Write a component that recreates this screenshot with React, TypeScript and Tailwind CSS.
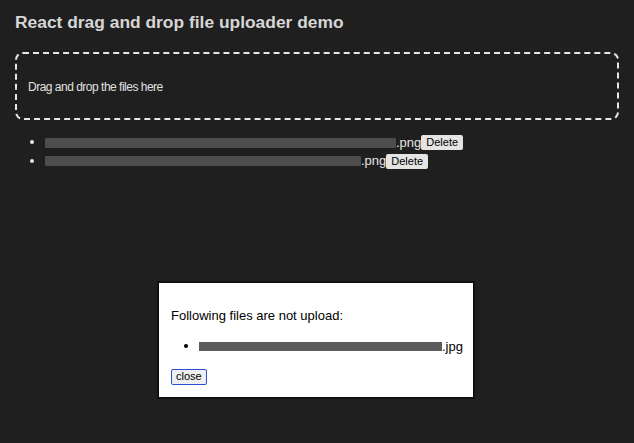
import React from 'react';

const files = [
  { id: 1, bar: 351, ext: '.png' },
  { id: 2, bar: 316, ext: '.png' },
];

const App: React.FC = () => {
  return (
    <div className="relative h-[443px] w-[634px] overflow-hidden bg-[#1f1f1f] px-[15px] pt-[11px] font-['Liberation_Sans',Arial,sans-serif] text-[#dcdcdc]">
      <h1 className="text-[17.4px] font-bold leading-[22px] text-[#d6d6d6]">React drag and drop file uploader demo</h1>

      <div className="mt-[19px] flex h-[68px] items-center rounded-[8px] border-2 border-dashed border-[#e6e6e6] px-[11px] pt-[2px]">
        <p className="text-[12px] tracking-[-0.5px] text-[#e0e0e0]">Drag and drop the files here</p>
      </div>

      <ul className="mt-[13px] list-disc pl-[30px] text-[13px] leading-[18px] text-[#e6e6e6]">
        {files.map((f) => (
          <li key={f.id}>
            <span className="inline-flex items-center align-middle">
              <span className="inline-block h-[10px] rounded-[1px] bg-[#4d4d4d]" style={{ width: f.bar }} />
              <span>{f.ext}</span>
              <button className="h-[15px] rounded-[2px] bg-[#e4e4e4] px-[5px] text-[11px] leading-[15px] text-black">
                Delete
              </button>
            </span>
          </li>
        ))}
      </ul>

      <div className="absolute left-[157px] top-[281px] w-[318px] border-2 border-[#111111] bg-white px-[12px] pb-[10px] pt-[25px] text-black">
        <p className="text-[13px] leading-[16px]">Following files are not upload:</p>
        <ul className="mt-[14px] list-disc pl-[28px] text-[13px] leading-[16px]">
          <li>
            <span className="inline-flex items-center align-middle">
              <span className="inline-block h-[9px] w-[243px] bg-[#5c5c5c]" />
              <span>.jpg</span>
            </span>
          </li>
        </ul>
        <button className="mt-[14px] h-[16px] rounded-[2px] border border-[#2b4fd6] bg-[#efefef] px-[4px] text-[11px] leading-[13px] text-black">
          close
        </button>
      </div>
    </div>
  );
};

export default App;
